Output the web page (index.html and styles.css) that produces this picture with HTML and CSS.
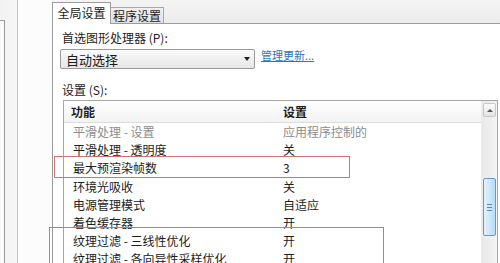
FILE: index.html
```html
<!DOCTYPE html>
<html lang="zh-CN">
<head>
    <meta charset="UTF-8">
    <title>NVIDIA 控制面板 - 管理 3D 设置</title>
    <link rel="stylesheet" href="styles.css">
</head>
<body>
    <div class="window">
        <div class="frame">
            <div class="frame-edge"></div>
            <div class="frame-line"></div>
        </div>

        <div class="panel">
            <div class="tabs">
                <div class="tab active">全局设置</div>
                <div class="tab">程序设置</div>
            </div>

            <div class="page">
                <div class="label">首选图形处理器 (P):</div>
                <div class="select-row">
                    <div class="select">
                        <span>自动选择</span>
                        <span class="arrow"></span>
                    </div>
                    <a class="link" href="#">管理更新...</a>
                </div>

                <div class="label settings-label">设置 (S):</div>
                <div class="list">
                    <div class="grid">
                        <div class="head">功能</div>
                        <div class="head">设置</div>

                        <div class="cell disabled">平滑处理 - 设置</div>
                        <div class="cell disabled">应用程序控制的</div>
                        <div class="cell">平滑处理 - 透明度</div>
                        <div class="cell">关</div>
                        <div class="cell">最大预渲染帧数</div>
                        <div class="cell">3</div>
                        <div class="cell">环境光吸收</div>
                        <div class="cell">关</div>
                        <div class="cell">电源管理模式</div>
                        <div class="cell">自适应</div>
                        <div class="cell">着色缓存器</div>
                        <div class="cell">开</div>
                        <div class="cell">纹理过滤 - 三线性优化</div>
                        <div class="cell">开</div>
                        <div class="cell">纹理过滤 - 各向异性采样优化</div>
                        <div class="cell">开</div>
                    </div>
                    <div class="scrollbar">
                        <div class="scroll-btn"><span class="up"></span></div>
                        <div class="thumb"><span class="grip"></span></div>
                    </div>
                </div>
            </div>
        </div>
    </div>

    <!-- red marks drawn over the screenshot -->
    <div class="mark mark-one"></div>
    <div class="mark mark-two"></div>
</body>
</html>
```

FILE: styles.css
```css
body {
    margin: 0;
    width: 500px;
    height: 263px;
    overflow: hidden;
    background: #f6f6f6;
    font-family: "Noto Sans CJK SC", "Liberation Sans", sans-serif;
    font-size: 12px;
    color: #1c1c1c;
    position: relative;
}
.window {
    display: flex;
    height: 263px;
}
.frame {
    width: 52px;
    flex: none;
    display: flex;
    background: linear-gradient(to right, #f2f2f2, #fbfbfb);
}
.frame-edge {
    width: 4px;
    margin-top: 20px;
    border-top: 1px solid #9a9a9a;
    border-right: 1px solid #9a9a9a;
    background: #fafafa;
}
.frame-line {
    margin-left: 12px;
    border-left: 1px solid #c4c4c4;
    width: 34px;
    background: #fcfcfc;
}
.panel {
    flex: 1;
    display: flex;
    flex-direction: column;
    min-height: 0;
}
.tabs {
    height: 23px;
    flex: none;
    display: flex;
    align-items: flex-end;
    border-bottom: 1px solid #9c9c9c;
    background: linear-gradient(#f4f4f4, #ececec);
}
.tab {
    height: 15px;
    line-height: 15px;
    width: 52px;
    text-align: center;
    font-size: 12px;
    white-space: nowrap;
    background: linear-gradient(#f0f0f0, #e2e2e2);
    border: 1px solid #a8a8a8;
    border-bottom: none;
    border-left: none;
}
.tab.active {
    height: 20px;
    line-height: 20px;
    width: 57px;
    background: #fff;
    border-left: 1px solid #9c9c9c;
    border-color: #9c9c9c;
    margin-bottom: -1px;
    padding-bottom: 1px;
}
.page {
    flex: 1;
    min-height: 0;
    overflow: hidden;
    background: #fff;
    border-left: 1px solid #9c9c9c;
    padding-left: 7px;
}
.label {
    margin-top: 6px;
    padding-left: 2px;
    height: 16px;
    line-height: 16px;
}
.select-row {
    display: flex;
    align-items: flex-start;
    margin-top: 3px;
}
.select {
    width: 184px;
    height: 18px;
    padding: 0 4px 0 5px;
    border: 1px solid #9a9a9a;
    border-radius: 2px;
    background: linear-gradient(#fbfbfb, #e6e6e6);
    display: flex;
    align-items: center;
    justify-content: space-between;
    font-size: 13px;
}
.arrow {
    width: 0;
    height: 0;
    border-left: 3px solid transparent;
    border-right: 3px solid transparent;
    border-top: 4px solid #222;
}
.link {
    margin-left: 6px;
    margin-top: -2px;
    color: #2a76c0;
    font-size: 11px;
    text-decoration: underline;
}
.settings-label {
    margin-top: 13px;
}
.list {
    margin-left: 3px;
    margin-top: 2px;
    width: 433px;
    height: 180px;
    border: 1px solid #a6a6a6;
    display: flex;
}
.grid {
    flex: 1;
    display: grid;
    grid-template-columns: 212px 1fr;
    grid-template-rows: 22px;
    grid-auto-rows: 18.2px;
    align-content: start;
}
.head {
    line-height: 21px;
    padding-left: 7px;
    font-weight: bold;
    background: linear-gradient(#ffffff, #f3f3f3);
    border-bottom: 1px solid #dcdcdc;
}
.cell {
    padding-left: 9px;
    line-height: 18.2px;
}
.cell:nth-child(even) {
    padding-left: 7px;
}
.cell.disabled {
    color: #8c8c8c;
}
.scrollbar {
    width: 15px;
    flex: none;
    background: linear-gradient(to right, #e9e9e9, #f4f4f4);
    border-left: 1px solid #ececec;
    display: flex;
    flex-direction: column;
    align-items: center;
}
.scroll-btn {
    margin-top: 2px;
    width: 11px;
    height: 12px;
    border: 1px solid #c8c8c8;
    border-radius: 2px;
    background: linear-gradient(#fafafa, #e4e4e4);
    display: flex;
    align-items: center;
    justify-content: center;
}
.up {
    width: 0;
    height: 0;
    border-left: 3px solid transparent;
    border-right: 3px solid transparent;
    border-bottom: 3px solid #555;
}
.thumb {
    margin-top: 61px;
    width: 11px;
    height: 56px;
    border: 1px solid #6f98c0;
    border-radius: 2px;
    background: linear-gradient(to right, #e4f2fc, #b7dcf5);
    display: flex;
    align-items: center;
    justify-content: center;
}
.grip {
    width: 5px;
    height: 5px;
    border-top: 1px solid #5d87b0;
    border-bottom: 1px solid #5d87b0;
    background: linear-gradient(#5d87b0, #5d87b0) center / 5px 1px no-repeat;
}
.mark {
    position: absolute;
    border: 1px solid #cf7474;
}
.mark-one {
    left: 54px;
    top: 156px;
    width: 294px;
    height: 20px;
}
.mark-two {
    left: 49px;
    top: 227px;
    width: 333px;
    height: 40px;
    border-bottom: none;
}
```
